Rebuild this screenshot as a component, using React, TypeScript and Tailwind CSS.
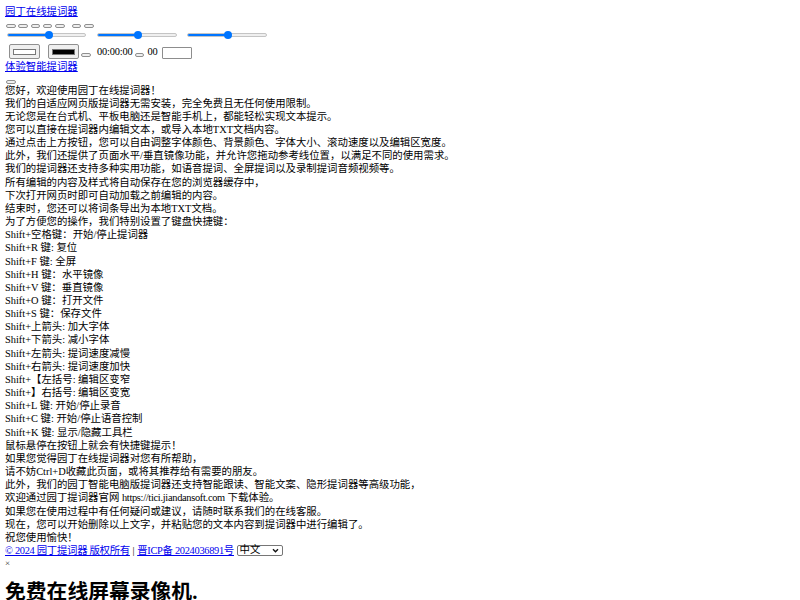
import React from "react";

const lines: React.ReactNode[] = [
  "您好，欢迎使用园丁在线提词器！",
  "我们的自适应网页版提词器无需安装，完全免费且无任何使用限制。",
  "无论您是在台式机、平板电脑还是智能手机上，都能轻松实现文本提示。",
  "您可以直接在提词器内编辑文本，或导入本地TXT文档内容。",
  "通过点击上方按钮，您可以自由调整字体颜色、背景颜色、字体大小、滚动速度以及编辑区宽度。",
  "此外，我们还提供了页面水平/垂直镜像功能，并允许您拖动参考线位置，以满足不同的使用需求。",
  "我们的提词器还支持多种实用功能，如语音提词、全屏提词以及录制提词音频视频等。",
  "所有编辑的内容及样式将自动保存在您的浏览器缓存中，",
  "下次打开网页时即可自动加载之前编辑的内容。",
  "结束时，您还可以将词条导出为本地TXT文档。",
  "为了方便您的操作，我们特别设置了键盘快捷键：",
  "Shift+空格键：开始/停止提词器",
  "Shift+R 键: 复位",
  "Shift+F 键: 全屏",
  "Shift+H 键：水平镜像",
  "Shift+V 键：垂直镜像",
  "Shift+O 键：打开文件",
  "Shift+S 键：保存文件",
  "Shift+上箭头: 加大字体",
  "Shift+下箭头: 减小字体",
  "Shift+左箭头: 提词速度减慢",
  "Shift+右箭头: 提词速度加快",
  "Shift+【左括号: 编辑区变窄",
  "Shift+】右括号: 编辑区变宽",
  "Shift+L 键: 开始/停止录音",
  "Shift+C 键: 开始/停止语音控制",
  "Shift+K 键: 显示/隐藏工具栏",
  "鼠标悬停在按钮上就会有快捷键提示！",
  "如果您觉得园丁在线提词器对您有所帮助，",
  "请不妨Ctrl+D收藏此页面，或将其推荐给有需要的朋友。",
  "此外，我们的园丁智能电脑版提词器还支持智能跟读、智能文案、隐形提词器等高级功能，",
  <>
    欢迎通过园丁提词器官网 <span className="tracking-[-0.3px]">https://tici.jiandansoft.com</span> 下载体验。
  </>,
  "如果您在使用过程中有任何疑问或建议，请随时联系我们的在线客服。",
  "现在，您可以开始删除以上文字，并粘贴您的文本内容到提词器中进行编辑了。",
  "祝您使用愉快！",
];

function TinyButton({ className = "" }: { className?: string }) {
  return (
    <button
      className={`w-[9.5px] h-[4px] shrink-0 border border-[#8f8f8f] bg-[#efefef] rounded-[2px] ${className}`}
    />
  );
}

function Slider({ width, thumb, className = "" }: { width: number; thumb: number; className?: string }) {
  return (
    <div className={`relative h-[10px] flex items-center ${className}`} style={{ width }}>
      <div className="w-full h-[3.5px] rounded-full bg-[#efefef] border border-[#c4c4c4] overflow-hidden">
        <div className="h-full bg-[#0075ff]" style={{ width: thumb }} />
      </div>
      <div
        className="absolute top-[0.75px] w-[8.5px] h-[8.5px] rounded-full bg-[#0075ff]"
        style={{ left: thumb - 4.25 }}
      />
    </div>
  );
}

function ColorBox({ color, className = "" }: { color: string; className?: string }) {
  return (
    <div
      className={`w-[31px] h-[15px] px-[3px] py-[3.5px] flex border border-[#8f8f8f] bg-[#efefef] rounded-[2px] ${className}`}
    >
      <div className={`flex-1 border border-[#777] ${color}`} />
    </div>
  );
}

export default function App() {
  return (
    <div className="p-[5px] text-black bg-white font-['Liberation_Serif','Noto_Sans_CJK_SC',serif] text-[10.4px] leading-[13.15px]">
      <a href="#" className="text-[#0000ee] underline">园丁在线提词器</a>

      {/* toolbar buttons */}
      <div className="mt-[6px] h-[4px] flex items-center pl-[1px]">
        <TinyButton />
        <TinyButton className="ml-[2.8px]" />
        <TinyButton className="ml-[2.8px]" />
        <TinyButton className="ml-[2.8px]" />
        <TinyButton className="ml-[2.8px]" />
        <TinyButton className="ml-[7.3px]" />
        <TinyButton className="ml-[2.8px]" />
      </div>

      {/* sliders */}
      <div className="mt-[2px] flex items-center">
        <Slider width={79} thumb={42} className="ml-[2px]" />
        <Slider width={80} thumb={41} className="ml-[11px]" />
        <Slider width={80} thumb={41} className="ml-[10px]" />
      </div>

      {/* colors and timer */}
      <div className="mt-[3.35px] h-[16px] flex items-start">
        <ColorBox color="bg-white" className="ml-[4px] mt-[0.5px]" />
        <ColorBox color="bg-black" className="ml-[7.7px] mt-[0.5px]" />
        <TinyButton className="ml-[2.7px] mt-[9.5px]" />
        <span className="ml-[6px] mt-[1.9px] tracking-[-0.15px]">00:00:00</span>
        <TinyButton className="ml-[2.3px] mt-[9.5px]" />
        <span className="ml-[3px] mt-[1.9px]">00</span>
        <input
          type="text"
          className="ml-[4px] mt-[3.5px] w-[30px] h-[12px] border border-[#8d8d8d] rounded-[1px] bg-white outline-none"
        />
      </div>

      <a href="#" className="block w-fit text-[#0000ee] underline">体验智能提词器</a>

      <div className="h-[10.85px] pt-[7.4px] pl-[1px]">
        <TinyButton className="block h-[3.5px]" />
      </div>

      <div>
        {lines.map((line, i) => (
          <div key={i} className="whitespace-pre">{line}</div>
        ))}
      </div>

      {/* footer */}
      <div className="flex items-center h-[13.15px] whitespace-pre">
        <a href="#" className="text-[#0000ee] underline tracking-[-0.3px]">© 2024 园丁提词器 版权所有</a>
        <span> | </span>
        <a href="#" className="text-[#0000ee] underline tracking-[-0.3px]">晋ICP备 2024036891号</a>
        <span> </span>
        <div className="w-[46px] h-[11.7px] flex items-center justify-between pl-[2px] pr-[3px] border border-[#767676] rounded-[2px] bg-white leading-none">
          <span>中文</span>
          <svg width="7" height="5" viewBox="0 0 7 5" fill="none">
            <path d="M1 1.2 L3.5 3.7 L6 1.2" stroke="#111" strokeWidth="1.4" />
          </svg>
        </div>
      </div>

      <div className="text-[9px] leading-[13px] text-[#333]">×</div>

      <h1 className="mt-[10px] text-[20.8px] leading-[24px] font-bold">免费在线屏幕录像机.</h1>
    </div>
  );
}
